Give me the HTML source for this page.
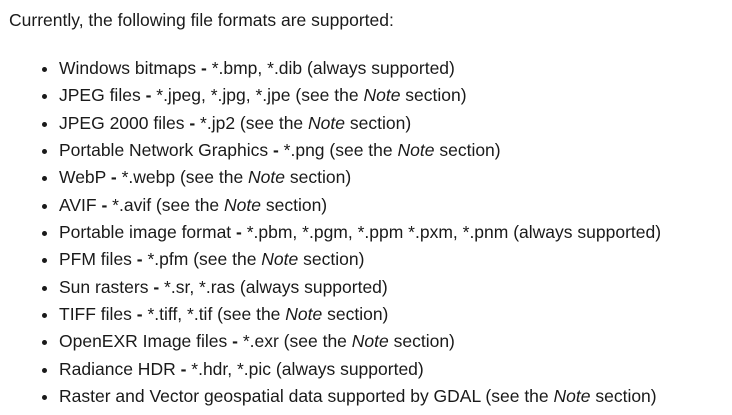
<!DOCTYPE html>
<html><head><meta charset="utf-8"><style>
html,body{margin:0;padding:0;background:#fff;width:732px;height:415px;overflow:hidden}
body{font-family:"Liberation Sans",Arial,sans-serif;font-size:17.5px;color:#1a1a1a}
p{position:absolute;left:9px;top:10px;margin:0;line-height:20px}
ul{position:absolute;left:0;top:55px;margin:0;padding-left:59px;list-style:disc}
li{line-height:27.33px;height:27.33px;white-space:nowrap}
</style></head><body>
<p>Currently, the following file formats are supported:</p>
<ul>
<li>Windows bitmaps <b>-</b> *.bmp, *.dib (always supported)</li>
<li>JPEG files <b>-</b> *.jpeg, *.jpg, *.jpe (see the <i>Note</i> section)</li>
<li>JPEG 2000 files <b>-</b> *.jp2 (see the <i>Note</i> section)</li>
<li>Portable Network Graphics <b>-</b> *.png (see the <i>Note</i> section)</li>
<li>WebP <b>-</b> *.webp (see the <i>Note</i> section)</li>
<li>AVIF <b>-</b> *.avif (see the <i>Note</i> section)</li>
<li>Portable image format <b>-</b> *.pbm, *.pgm, *.ppm *.pxm, *.pnm (always supported)</li>
<li>PFM files <b>-</b> *.pfm (see the <i>Note</i> section)</li>
<li>Sun rasters <b>-</b> *.sr, *.ras (always supported)</li>
<li>TIFF files <b>-</b> *.tiff, *.tif (see the <i>Note</i> section)</li>
<li>OpenEXR Image files <b>-</b> *.exr (see the <i>Note</i> section)</li>
<li>Radiance HDR <b>-</b> *.hdr, *.pic (always supported)</li>
<li>Raster and Vector geospatial data supported by GDAL (see the <i>Note</i> section)</li>
</ul>
</body></html>
